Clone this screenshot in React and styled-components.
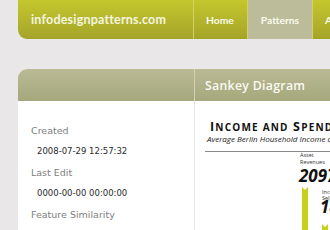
import styled, { createGlobalStyle } from 'styled-components';

const GlobalStyle = createGlobalStyle`
  html, body {
    margin: 0;
    padding: 0;
    background: #e9e7e8;
    overflow: hidden;
  }
`;

function App() {
  return (
    <Page>
      <GlobalStyle />
      <TopBar>
        <Brand>infodesignpatterns.com</Brand>
        <Nav>
          <NavItem>Home</NavItem>
          <NavItem $active>Patterns</NavItem>
          <NavItem>About</NavItem>
        </Nav>
      </TopBar>
      <Card>
        <CardHead />
        <CardHead $title>Sankey Diagram</CardHead>
        <Meta>
          <Label>Created</Label>
          <Value>2008-07-29 12:57:32</Value>
          <Label>Last Edit</Label>
          <Value>0000-00-00 00:00:00</Value>
          <Label>Feature Similarity</Label>
        </Meta>
        <Figure>
          <Sankey />
        </Figure>
      </Card>
    </Page>
  );
}

const font = "'Open Sans', sans-serif";

// chart image of the pattern, cropped by the frame like the original screenshot
function Sankey() {
  return (
    <svg width="135" height="129" viewBox="0 0 135 129">
      <text x="15" y="30" fontFamily={font} fontWeight="700" fontSize="12.5" letterSpacing="1.2" fill="#111">
        I<tspan fontSize="10">NCOME AND</tspan> S<tspan fontSize="10">PENDING</tspan>
      </text>
      <text x="12" y="41" fontFamily={font} fontStyle="italic" fontSize="8" fill="#1a1a1a">
        Average Berlin Household Income and Spending
      </text>
      <line x1="10" y1="50.5" x2="135" y2="50.5" stroke="#8a8a8a" strokeWidth="1" />
      <text x="105" y="56" fontFamily={font} fontSize="5.5" fill="#333">Asset</text>
      <text x="105" y="63" fontFamily={font} fontSize="5.5" fill="#333">Revenues</text>
      <text x="104" y="81" fontFamily={font} fontStyle="italic" fontWeight="700" fontSize="17" fill="#111">2097</text>
      <path d="M107 86 L113 86 L113 129 L107 129 Z" fill="#c6d11c" />
      <path d="M107 86 L110 89 L113 86" fill="#ffffff" />
      <text x="127" y="93" fontFamily={font} fontSize="5.5" fill="#333">Income</text>
      <text x="127" y="99" fontFamily={font} fontSize="5.5" fill="#333">Self</text>
      <text x="125" y="112" fontFamily={font} fontStyle="italic" fontWeight="700" fontSize="17" fill="#111">18</text>
      <path d="M127 123 L133 123 L133 129 L127 129 Z" fill="#c6d11c" />
      <path d="M127 123 L130 126 L133 123" fill="#ffffff" />
    </svg>
  );
}

const Page = styled.div`
  padding-left: 18px;
  width: 400px;
  font-family: 'DejaVu Sans', Verdana, sans-serif;
`;

const TopBar = styled.header`
  display: flex;
  align-items: stretch;
  height: 39px;
  background: linear-gradient(#c4c72d, #a5a42a);
  border-radius: 0 0 0 9px;
`;

const Brand = styled.div`
  width: 162px;
  padding-left: 13px;
  display: flex;
  align-items: center;
  color: #f4f5e0;
  font-family: Lato, sans-serif;
  font-size: 12.5px;
  font-weight: 700;
  letter-spacing: 0.2px;
  border-right: 1px solid #d0d366;
`;

const Nav = styled.nav`
  display: flex;
`;

const NavItem = styled.div`
  display: flex;
  align-items: center;
  padding: 0 13px 0 12px;
  color: #fbfbee;
  font-family: Lato, sans-serif;
  font-size: 10.3px;
  font-weight: 700;
  border-right: 1px solid #d0d366;
  background: ${p => (p.$active ? '#bcbc9a' : 'transparent')};
  padding-left: ${p => (p.$active ? '13px' : '12px')};
`;

const Card = styled.section`
  margin-top: 30px;
  display: grid;
  grid-template-columns: 176px 1fr;
  grid-template-rows: 32px 1fr;
  background: #fff;
  border-radius: 9px 0 0 0;
  height: 161px;
`;

const CardHead = styled.div`
  background: linear-gradient(#babb95, #a5a77c);
  display: flex;
  align-items: center;
  color: #fafaf2;
  font-family: 'Open Sans', sans-serif;
  font-size: 12.3px;
  font-weight: 600;
  letter-spacing: 0.3px;
  padding-left: ${p => (p.$title ? '10px' : '0')};
  border-radius: ${p => (p.$title ? '0' : '9px 0 0 0')};
  border-left: ${p => (p.$title ? '1px solid #cfd0b4' : 'none')};
`;

const Meta = styled.div`
  padding: 23px 0 0 13px;
  display: flex;
  flex-direction: column;
`;

const Label = styled.div`
  color: #808080;
  font-family: 'DejaVu Sans', Verdana, sans-serif;
  font-size: 9.5px;
  line-height: 14px;
  margin-bottom: 6px;
`;

const Value = styled.div`
  color: #2a2a2a;
  font-family: 'DejaVu Sans', Verdana, sans-serif;
  font-size: 8.5px;
  line-height: 14px;
  padding-left: 6px;
  margin-bottom: 8px;
`;

const Figure = styled.div`
  border-left: 1px solid #e6e6e6;
  overflow: hidden;
`;

export default App;
